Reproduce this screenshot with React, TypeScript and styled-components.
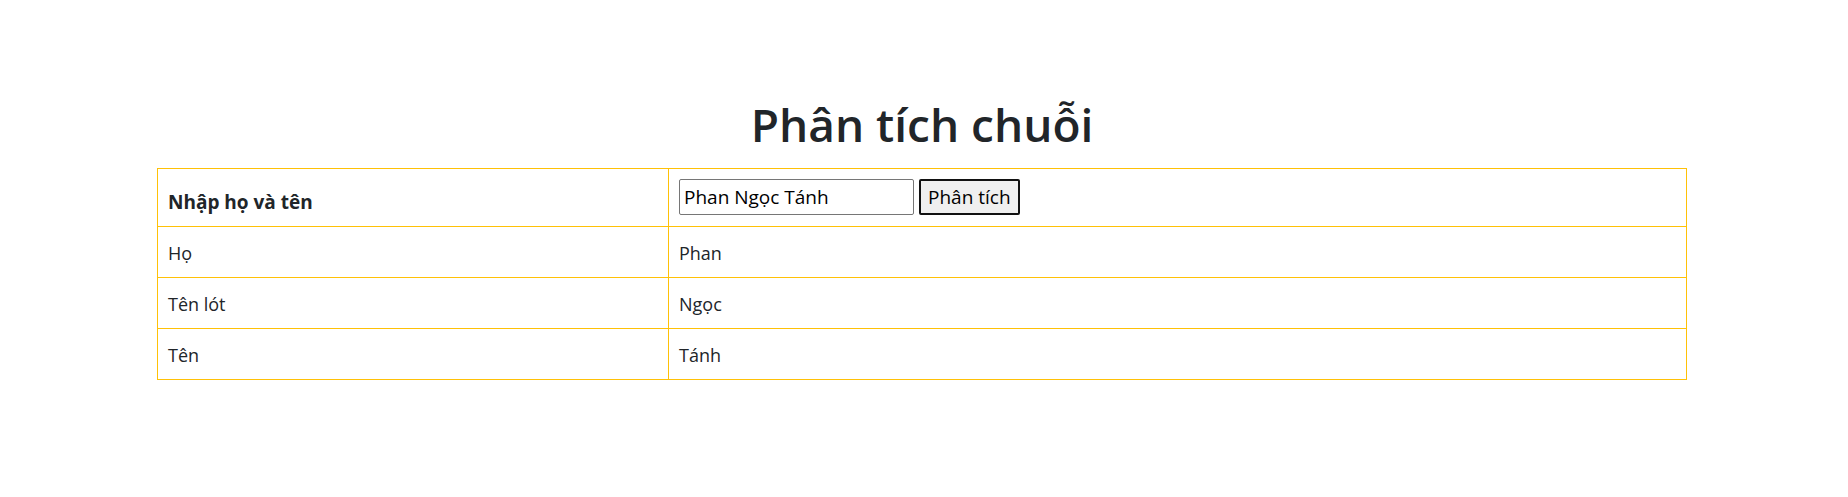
import React from "react";
import styled, { createGlobalStyle } from "styled-components";

const Global = createGlobalStyle`
  html, body { margin: 0; padding: 0; background: #ffffff; }
  body { font-family: "Open Sans", "Noto Sans", sans-serif; color: #212529; }
`;

const Page = styled.div`
  display: flex;
  flex-direction: column;
  align-items: flex-start;
  padding: 95px 0 0 157px;
  width: 1530px;
`;

const Title = styled.h1`
  margin: 0 0 15px 0;
  align-self: stretch;
  text-align: center;
  font-family: "Open Sans", "Noto Sans", sans-serif;
  font-size: 46px;
  font-weight: 600;
  line-height: 58px;
  color: #212529;
`;

const Table = styled.table`
  width: 1530px;
  border-collapse: collapse;
  border: 1px solid #ffc107;
`;

const Cell = styled.td<{ $head?: boolean; $label?: boolean }>`
  border: 1px solid #ffc107;
  padding: ${(p) => (p.$head ? "20px 11px 11px 10px" : "13px 11px 11px 10px")};
  font-family: "Open Sans", "Noto Sans", sans-serif;
  font-size: ${(p) => (p.$head ? 19 : 18)}px;
  line-height: 26px;
  font-weight: ${(p) => (p.$head ? 700 : 400)};
  vertical-align: top;
  text-align: left;
  width: ${(p) => (p.$label ? "489px" : "auto")};
  color: #212529;
`;

const FormCell = styled.td`
  border: 1px solid #ffc107;
  padding: 10px 11px 11px 10px;
  vertical-align: top;
`;

const Form = styled.div`
  display: flex;
  align-items: center;
  gap: 5px;
`;

const Input = styled.input`
  box-sizing: border-box;
  width: 235px;
  height: 36px;
  padding: 0 4px;
  border: 1px solid #767676;
  border-radius: 2px;
  font-family: "Open Sans", "Noto Sans", sans-serif;
  font-size: 19px;
  color: #000;
  outline: none;
`;

const Button = styled.button`
  box-sizing: border-box;
  height: 36px;
  padding: 0 7px;
  border: 2px solid #111;
  border-radius: 2px;
  background: #efefef;
  font-family: "Open Sans", "Noto Sans", sans-serif;
  font-size: 19px;
  color: #000;
`;

const rows = [
  { label: "Họ", value: "Phan" },
  { label: "Tên lót", value: "Ngọc" },
  { label: "Tên", value: "Tánh" },
];

export default function App() {
  return (
    <>
      <Global />
      <Page>
        <Title>Phân tích chuỗi</Title>
        <Table>
          <tbody>
            <tr>
              <Cell as="th" $head $label>
                Nhập họ và tên
              </Cell>
              <FormCell>
                <Form>
                  <Input defaultValue="Phan Ngọc Tánh" />
                  <Button>Phân tích</Button>
                </Form>
              </FormCell>
            </tr>
            {rows.map((r) => (
              <tr key={r.label}>
                <Cell $label>{r.label}</Cell>
                <Cell>{r.value}</Cell>
              </tr>
            ))}
          </tbody>
        </Table>
      </Page>
    </>
  );
}
